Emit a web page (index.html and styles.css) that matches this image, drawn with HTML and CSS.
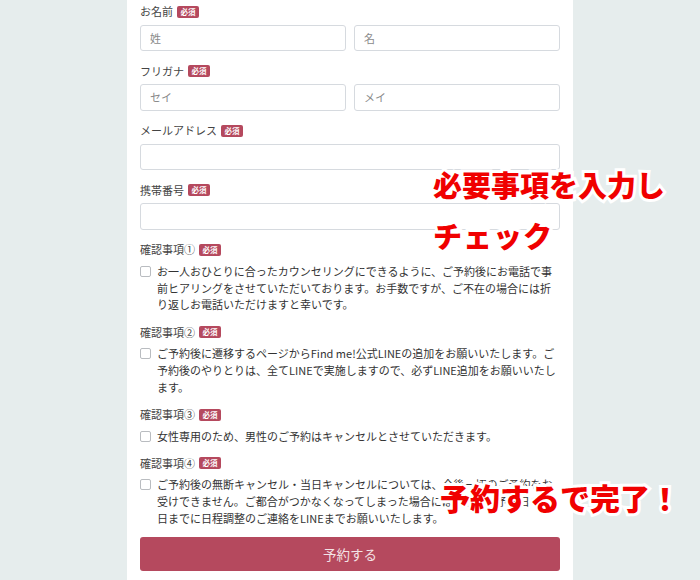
FILE: index.html
```html
<!DOCTYPE html>
<html lang="ja">
<head>
    <meta charset="UTF-8">
    <meta name="viewport" content="width=device-width, initial-scale=1.0">
    <title>ご予約フォーム</title>
    <link rel="stylesheet" href="styles.css">
</head>
<body>
<div class="page">
    <form class="card" action="">
        <div class="group">
            <label class="label">お名前<span class="req">必須</span></label>
            <div class="row">
                <input class="field" type="text" placeholder="姓">
                <input class="field" type="text" placeholder="名">
            </div>
        </div>
        <div class="group">
            <label class="label">フリガナ<span class="req">必須</span></label>
            <div class="row">
                <input class="field" type="text" placeholder="セイ">
                <input class="field" type="text" placeholder="メイ">
            </div>
        </div>
        <div class="group">
            <label class="label">メールアドレス<span class="req">必須</span></label>
            <input class="field" type="email">
        </div>
        <div class="group">
            <label class="label">携帯番号<span class="req">必須</span></label>
            <input class="field" type="tel">
        </div>

        <div class="check-group">
            <label class="label">確認事項①<span class="req">必須</span></label>
            <label class="check">
                <input type="checkbox">
                <span>お一人おひとりに合ったカウンセリングにできるように、ご予約後にお電話で事前ヒアリングをさせていただいております。お手数ですが、ご不在の場合には折り返しお電話いただけますと幸いです。</span>
            </label>
        </div>
        <div class="check-group">
            <label class="label">確認事項②<span class="req">必須</span></label>
            <label class="check">
                <input type="checkbox">
                <span>ご予約後に遷移するページからFind me!公式LINEの追加をお願いいたします。ご予約後のやりとりは、全てLINEで実施しますので、必ずLINE追加をお願いいたします。</span>
            </label>
        </div>
        <div class="check-group">
            <label class="label">確認事項③<span class="req">必須</span></label>
            <label class="check">
                <input type="checkbox">
                <span>女性専用のため、男性のご予約はキャンセルとさせていただきます。</span>
            </label>
        </div>
        <div class="check-group">
            <label class="label">確認事項④<span class="req">必須</span></label>
            <label class="check">
                <input type="checkbox">
                <span>ご予約後の無断キャンセル・当日キャンセルについては、今後一切のご予約をお受けできません。ご都合がつかなくなってしまった場合には、必ずご予約日の前日までに日程調整のご連絡をLINEまでお願いいたします。</span>
            </label>
        </div>

        <button class="submit" type="button">予約する</button>
    </form>

    <!-- 説明用の注釈 -->
    <p class="note note-1">必要事項を入力し</p>
    <p class="note note-2">チェック</p>
    <p class="note note-3">予約するで完了！</p>
</div>
</body>
</html>
```

FILE: styles.css
```css
* {
    box-sizing: border-box;
    margin: 0;
    padding: 0;
}
body {
    background: #e6eded;
    font-family: "Noto Sans CJK JP", "Noto Sans", sans-serif;
    color: #3a3a3a;
    font-size: 11px;
    line-height: 16.8px;
}
.page {
    position: relative;
    width: 700px;
    height: 580px;
    overflow: hidden;
}
.card {
    width: 446px;
    margin: 0 auto;
    background: #fff;
    padding: 3px 13px 20px;
}
.group {
    margin-bottom: 11.5px;
}
.check-group {
    margin-bottom: 10.5px;
}
.label {
    display: flex;
    align-items: center;
    height: 17px;
    margin-bottom: 4.5px;
    color: #444;
    font-size: 11px;
}
.req {
    display: inline-block;
    margin-left: 4px;
    padding: 0 3.5px;
    height: 12px;
    line-height: 12px;
    font-size: 7.5px;
    font-weight: bold;
    color: #fff;
    background: #b5495e;
    border-radius: 2px;
}
.row {
    display: grid;
    grid-template-columns: 1fr 1fr;
    gap: 8px;
}
.field {
    display: block;
    width: 100%;
    height: 26.6px;
    padding: 0 9px;
    font-family: inherit;
    font-size: 11px;
    color: #333;
    border: 1px solid #d6dadf;
    border-radius: 3px;
    background: #fff;
}
.field::placeholder {
    color: #8a8a8a;
}
.check {
    display: flex;
    gap: 6px;
    align-items: flex-start;
}
.check input {
    appearance: none;
    flex: none;
    width: 11px;
    height: 11px;
    margin-top: 3px;
    border: 1px solid #b9bcc0;
    border-radius: 2px;
    background: #fff;
}
.check span {
    flex: 1;
    color: #333;
}
.submit {
    display: block;
    width: 100%;
    height: 33.5px;
    border: none;
    border-radius: 3px;
    background: #b5495e;
    color: #f3e3e6;
    font-family: inherit;
    font-size: 13.5px;
}
.note {
    position: absolute;
    font-size: 29px;
    line-height: 1;
    font-weight: 900;
    color: #f00000;
    -webkit-text-stroke: 6px #fff;
    paint-order: stroke fill;
    white-space: nowrap;
}
.note-1 {
    left: 433px;
    top: 170px;
}
.note-2 {
    left: 433px;
    top: 221px;
    letter-spacing: 1px;
}
.note-3 {
    left: 440px;
    top: 482px;
    font-size: 30px;
}
```
